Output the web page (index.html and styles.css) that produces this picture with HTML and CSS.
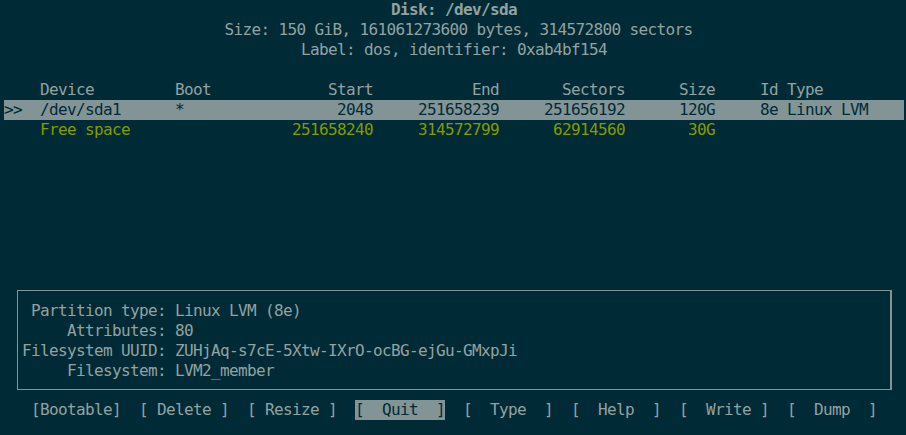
FILE: index.html
```
<!DOCTYPE html>
<html lang="en">
<head>
<meta charset="utf-8">
<title>cfdisk</title>
<link rel="stylesheet" href="styles.css">
</head>
<body>
<div class="term">
  <header class="disk-info">
    <div class="line title">Disk: /dev/sda</div>
    <div class="line size">Size: 150 GiB, 161061273600 bytes, 314572800 sectors</div>
    <div class="line">Label: dos, identifier: 0xab4bf154</div>
  </header>

  <section class="table">
    <div class="row head">
      <span class="c-mark"></span>
      <span class="c-dev">Device</span>
      <span class="c-boot">Boot</span>
      <span class="c-num">Start</span>
      <span class="c-num">End</span>
      <span class="c-num">Sectors</span>
      <span class="c-num">Size</span>
      <span class="c-type">Id Type</span>
    </div>
    <div class="row selected">
      <span class="c-mark">&gt;&gt;</span>
      <span class="c-dev">/dev/sda1</span>
      <span class="c-boot">*</span>
      <span class="c-num">2048</span>
      <span class="c-num">251658239</span>
      <span class="c-num">251656192</span>
      <span class="c-num">120G</span>
      <span class="c-type">8e Linux LVM</span>
    </div>
    <div class="row free">
      <span class="c-mark"></span>
      <span class="c-dev">Free space</span>
      <span class="c-boot"></span>
      <span class="c-num">251658240</span>
      <span class="c-num">314572799</span>
      <span class="c-num">62914560</span>
      <span class="c-num">30G</span>
      <span class="c-type"></span>
    </div>
  </section>

  <section class="info-box">
    <div class="line"> Partition type: Linux LVM (8e)</div>
    <div class="line">     Attributes: 80</div>
    <div class="line">Filesystem UUID: ZUHjAq-s7cE-5Xtw-IXrO-ocBG-ejGu-GMxpJi</div>
    <div class="line">     Filesystem: LVM2_member</div>
  </section>

  <nav class="menu">
    <span class="btn">[Bootable]</span>
    <span class="btn">[ Delete ]</span>
    <span class="btn">[ Resize ]</span>
    <span class="btn active">[  Quit  ]</span>
    <span class="btn">[  Type  ]</span>
    <span class="btn">[  Help  ]</span>
    <span class="btn">[  Write ]</span>
    <span class="btn">[  Dump  ]</span>
  </nav>
</div>
</body>
</html>
```
FILE: styles.css
```
html, body {
  margin: 0;
  padding: 0;
  background: #002b36;
}

body {
  width: 906px;
  height: 435px;
  overflow: hidden;
}

.term {
  padding: 0 2px 0 4px;
  width: 900px;
  font-family: "DejaVu Sans Mono", "Liberation Mono", monospace;
  font-size: 16px;
  letter-spacing: -0.633px;
  line-height: 20px;
  color: #93a1a1;
  display: flex;
  flex-direction: column;
}

.line {
  height: 20px;
  white-space: pre;
}

.disk-info .line {
  text-align: center;
}

.disk-info .title {
  font-weight: bold;
}

.disk-info .size {
  padding-left: 9px;
}

.table {
  margin-top: 20px;
  height: 200px;
}

.row {
  display: grid;
  grid-template-columns: 36px 135px 36px 162px 126px 126px 90px 189px;
  height: 20px;
  white-space: pre;
}

.row .c-num {
  text-align: right;
}

.row .c-type {
  padding-left: 45px;
}

.row.selected {
  background: #839496;
  color: #002b36;
}

.row.free {
  color: #859900;
}

.info-box {
  margin-top: 10px;
  margin-left: 13px;
  width: 875px;
  height: 100px;
  box-sizing: border-box;
  border: 1px solid #839496;
  border-right-width: 2px;
  padding: 10px 0 8px 4px;
}

.menu {
  margin-top: 10px;
  display: flex;
  gap: 18px;
  padding-left: 27px;
  height: 20px;
}

.btn {
  width: 90px;
  white-space: pre;
}

.btn.active {
  background: #839496;
  color: #002b36;
}
```
